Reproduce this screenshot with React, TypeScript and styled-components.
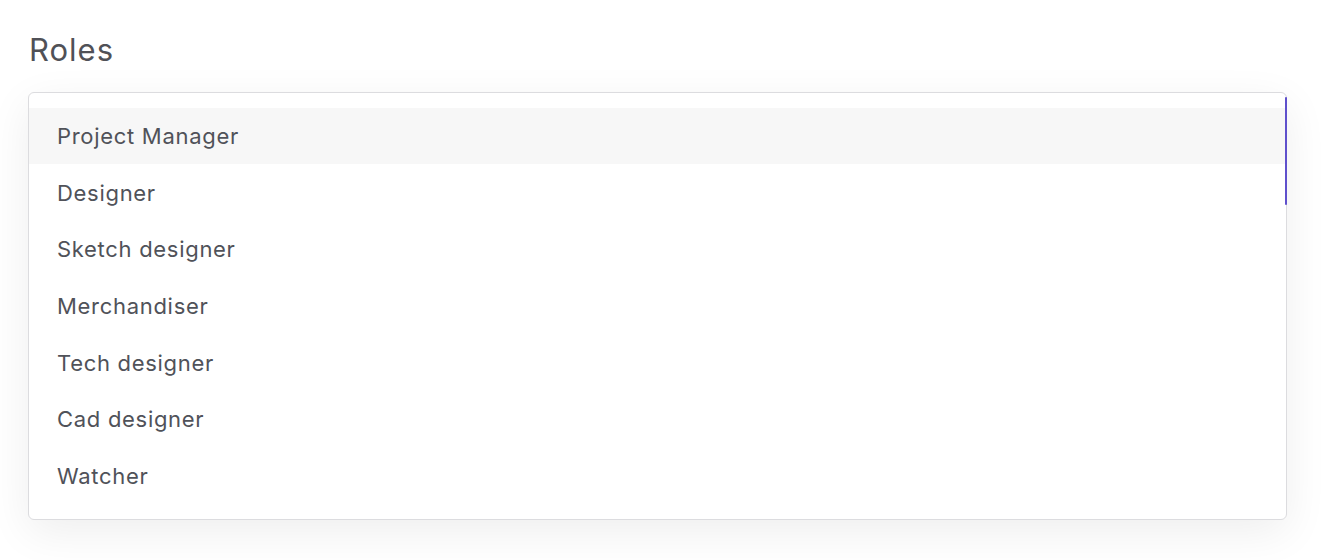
import React from "react";
import styled, { createGlobalStyle } from "styled-components";

const GlobalStyle = createGlobalStyle`
  html, body { margin: 0; padding: 0; background: #ffffff; }
  body { font-family: Inter, "Noto Sans", sans-serif; -webkit-font-smoothing: antialiased; }
`;

const Page = styled.div`
  padding: 32px 35px 40px 28px;
  box-sizing: border-box;
  width: 1322px;
`;

const Title = styled.h2`
  margin: 0 0 24px 1px;
  font-size: 31px;
  line-height: 36px;
  font-weight: 400;
  letter-spacing: 1px;
  color: #505157;
`;

const Menu = styled.div`
  position: relative;
  border: 1px solid #dcdcdf;
  border-radius: 6px;
  background: #ffffff;
  padding: 14.5px 0;
  box-shadow: 0 12px 44px rgba(0, 0, 0, 0.07);
`;

const List = styled.ul`
  list-style: none;
  margin: 0;
  padding: 0;
`;

const Item = styled.li<{ $active?: boolean }>`
  height: 56.7px;
  display: flex;
  align-items: center;
  padding: 0 28px;
  font-size: 22px;
  letter-spacing: 0.7px;
  color: #505259;
  background: ${(p) => (p.$active ? "#f7f7f7" : "transparent")};
`;

const ScrollThumb = styled.div`
  position: absolute;
  right: -1px;
  top: 4px;
  width: 2px;
  height: 108px;
  background: #5f50cc;
  border-radius: 1px;
`;

const roles = [
  "Project Manager",
  "Designer",
  "Sketch designer",
  "Merchandiser",
  "Tech designer",
  "Cad designer",
  "Watcher",
];

export default function App() {
  return (
    <>
      <GlobalStyle />
      <Page>
        <Title>Roles</Title>
        <Menu>
          <List>
            {roles.map((r, i) => (
              <Item key={r} $active={i === 0}>
                {r}
              </Item>
            ))}
          </List>
          <ScrollThumb />
        </Menu>
      </Page>
    </>
  );
}
